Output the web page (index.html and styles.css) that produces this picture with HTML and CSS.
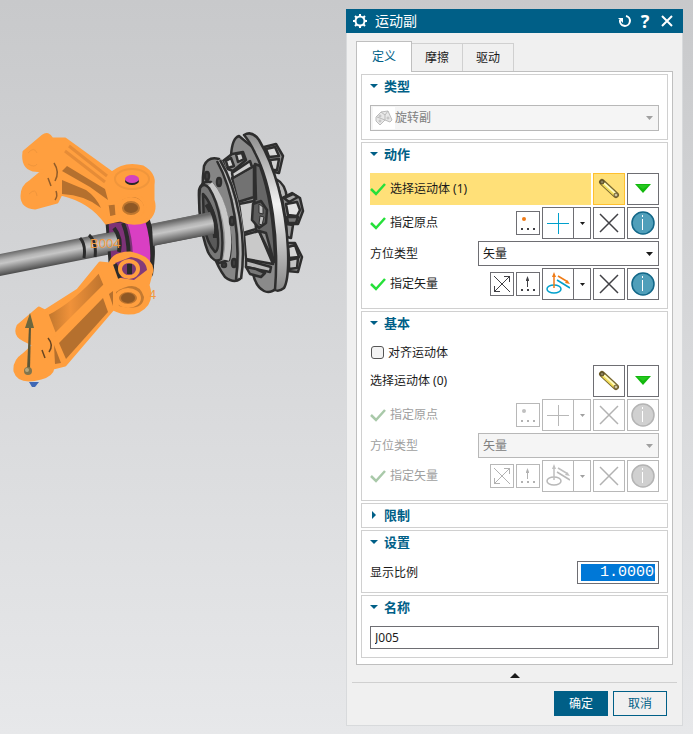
FILE: index.html
```html
<!DOCTYPE html>
<html lang="zh-CN">
<head>
    <meta charset="UTF-8">
    <meta name="viewport" content="width=device-width, initial-scale=1.0">
    <title>运动副</title>
    <link rel="stylesheet" href="styles.css">
</head>
<body>
    <!-- Shared icons -->
    <svg class="icon-defs" aria-hidden="true">
        <symbol id="icon-check" viewBox="0 0 16 16">
            <path d="M1 8 L6 13 L15 3" fill="none" stroke="currentColor" stroke-width="2.500"/>
        </symbol>
        <symbol id="icon-bone" viewBox="0 0 22 22">
            <path d="M4 4 L18 17" stroke="#77662f" stroke-width="6" stroke-linecap="round"/>
            <path d="M4 5 L17 17" stroke="#f2dc58" stroke-width="3"/>
            <path d="M6 5 L18 16" stroke="#fffbc0" stroke-width="2"/>
            <circle cx="4" cy="4" r="2" fill="#8b815f" stroke="#54451c"/>
            <circle cx="18" cy="17" r="2" fill="#cfc5a0" stroke="#6b5a2a"/>
        </symbol>
        <symbol id="icon-down" viewBox="0 0 16 10">
            <path d="M0 0 H16 L8 9 Z" fill="#12b80d"/>
            <path d="M2 1 H14 L8 5 Z" fill="#25c81f"/>
        </symbol>
        <symbol id="icon-point" viewBox="0 0 22 22">
            <circle class="accent-fill" cx="7" cy="7" r="2"/>
            <path class="ink-fill" d="M4 16h2v2h-2z M10 16h2v2h-2z M16 16h2v2h-2z"/>
        </symbol>
        <symbol id="icon-vector" viewBox="0 0 22 22">
            <path class="ink" d="M10.500 14 V5"/>
            <path class="ink-fill" d="M9 7 L10.500 3 L12 7 V8 H9 Z M4 16h2v2h-2z M10 16h2v2h-2z M16 16h2v2h-2z"/>
        </symbol>
        <symbol id="icon-reverse" viewBox="0 0 22 22">
            <path class="ink" d="M3 3 L19 19 M3 19 L19 3 M13 3.500 H18.500 V9 M3.500 13 V18.500 H9"/>
        </symbol>
        <symbol id="icon-plus" viewBox="0 0 22 22">
            <path class="blue" d="M0 11.500 H22 M11.500 1 V22"/>
        </symbol>
        <symbol id="icon-axis" viewBox="0 0 24 24">
            <ellipse class="blue thick" cx="8" cy="17" rx="7" ry="4"/>
            <path class="blue thick" d="M11 8 L24 16"/>
            <path class="accent thick" d="M8 16 V4 M12 4 L22 10"/>
            <path class="accent-fill" d="M6 5 L8 0 L10 5 Z M24 12 L19 11 L21 8 Z"/>
        </symbol>
        <symbol id="icon-cross" viewBox="0 0 20 20">
            <path class="ink thick" d="M1 1 L19 19 M1 19 L19 1"/>
        </symbol>
        <symbol id="icon-info" viewBox="0 0 24 24">
            <circle class="info-disc" cx="12" cy="12" r="11"/>
            <path d="M11.500 8 V19 M11.500 4 V6" stroke="#fff"/>
        </symbol>
        <symbol id="icon-caret" viewBox="0 0 7 4">
            <path d="M0 0 H7 L3.500 4 Z" fill="currentColor"/>
        </symbol>
    </svg>

    <main class="workspace">
        <svg class="scene" viewBox="0 0 346 734" preserveAspectRatio="xMinYMin meet" role="img" aria-label="三维模型">
            <defs>
                <linearGradient id="steel" gradientUnits="userSpaceOnUse" x1="0" y1="254" x2="4" y2="275">
                    <stop offset="0" stop-color="#6a6a6a"/>
                    <stop offset="0.300" stop-color="#b4b4b4"/>
                    <stop offset="0.450" stop-color="#c6c6c6"/>
                    <stop offset="0.700" stop-color="#8e8e8e"/>
                    <stop offset="1" stop-color="#4c4c4c"/>
                </linearGradient>
                <linearGradient id="rim" x1="0" y1="0" x2="0" y2="1">
                    <stop offset="0" stop-color="#8c8c8c"/>
                    <stop offset="0.450" stop-color="#f2f2f2"/>
                    <stop offset="1" stop-color="#888"/>
                </linearGradient>
                <linearGradient id="arm" x1="0" y1="0" x2="1" y2="0">
                    <stop offset="0" stop-color="#bd752d"/>
                    <stop offset="0.400" stop-color="#f0923a"/>
                    <stop offset="1" stop-color="#bb722d"/>
                </linearGradient>
            </defs>

            <!-- Shaft -->
            <path d="M0 254 L215 211 L218 233 L0 276 Z" fill="url(#steel)"/>
            <g fill="none" stroke="#2b2b2b" stroke-width="3">
                <path d="M80 238 Q86 244 84 258"/>
                <path d="M89 235 Q97 242 95 257"/>
            </g>

            <!-- Magenta collar -->
            <path d="M107 222 L148 219 Q157 244 151 275 L121 279 L110 262 Z" fill="#7d3277" stroke="#2b2b2b" stroke-width="3"/>
            <path d="M127 222 L147 220 Q154 246 149 275 L131 278 Q136 246 127 222 Z" fill="#d93fc3"/>
            <path d="M97 235 L118 231 Q122 240 119 250 L97 253 Z" fill="url(#steel)"/>
            <g fill="none" stroke="#2b2b2b" stroke-width="4">
                <path d="M114 228 Q122 238 119 252"/>
                <path d="M123 223 Q131 242 128 276"/>
                <path d="M147 220 Q155 246 151 275"/>
            </g>

            <!-- Bolts behind the flange -->
            <g stroke="#2e2e2e" stroke-width="2.500" stroke-linejoin="round">
                <path d="M264 147 L276 144 L283 156 L279 173 L268 171 Z" fill="#8f8f8f"/>
                <path d="M266 149 L275 147 L279 156 L269 157 Z" fill="#d8d8d8"/>
                <path d="M270 160 L279 159 L277 170 L272 170 Z" fill="#cfcfcf"/>
                <path d="M276 179 Q286 184 287 199 L281 198 Z" fill="#b8b8b8"/>
                <path d="M282 198 L292 193 L300 198 L303 211 L298 224 L286 224 Z" fill="#8a8a8a"/>
                <path d="M284 198 L293 194 L298 197 L289 202 Z" fill="#a8a8a8"/>
                <path d="M286 204 L297 202 L300 210 L297 216 L288 215 Z" fill="#e2e2e2"/>
                <path d="M287 217 L298 217 L296 223 L288 223 Z" fill="#777"/>
                <path d="M286 224 L293 225 L291 238 L287 237 Z" fill="#999"/>
                <path d="M287 243 L295 243 L302 257 L298 272 L287 271 Z" fill="#9a9a9a"/>
                <path d="M288 247 L295 245 L299 257 L289 258 Z" fill="#d6d6d6"/>
                <path d="M289 260 L298 258 L297 268 L289 269 Z" fill="#c2c2c2"/>
            </g>

            <!-- Rear flange -->
            <g stroke="#2e2e2e" stroke-width="2.500" stroke-linejoin="round">
                <path d="M231 156 Q232 138 239 136 L256 150 Q278 200 277 288 Q270 294 264 291 Q256 287 253 274 L240 240 Z" fill="#8a8a8a"/>
                <path d="M255 164 L260 166 Q274 205 275 262 L254 226 Z" fill="#666"/>
                <path d="M255 164 L256 200" fill="none"/>
                <path d="M232 178 L254 166 L254 197 L238 202 Z" fill="#727272"/>
                <path d="M239 204 L254 201 L256 229 L243 233 Z" fill="#cecece"/>
                <path d="M244 235 L259 231 L273 264 L246 259 Z" fill="#c9c9c9"/>
                <path d="M259 231 L266 233 L274 262 Z" fill="#8f8f8f"/>
                <path d="M246 260 L271 267 L270 272 L246 267 Z" fill="#b8b8b8"/>
                <path d="M246 267 L256 269 L265 273 L261 277 L250 274 Z" fill="#777"/>
                <path d="M232 173 L250 161 L252 167 L233 178 Z" fill="#cfcfcf"/>
                <path d="M223 161 L232 154 L243 152 L246 160 L233 171 L225 168 Z" fill="#8e8e8e"/>
                <path d="M226 161 L231 158 L234 166 L228 168 Z" fill="#d6d6d6"/>
                <path d="M236 154 L242 153 L244 159 L238 162 Z" fill="#d0d0d0"/>
                <path d="M253 204 L261 201 L267 210 L266 223 L259 228 L252 220 Z" fill="#5c5c5c"/>
                <path d="M259 204 L263 207 L263 214 L259 213 Z M260 216 L264 217 L262 225 L259 224 Z" fill="#bdbdbd" stroke-width="1"/>
                <path d="M244 135 Q252 130 259 140 C274 165 286 205 288 250 Q289 280 284 288 Q279 292 275 290 C279 240 272 185 255 153 Q250 142 244 135 Z" fill="url(#rim)"/>
            </g>

            <!-- Front hub -->
            <g stroke="#2e2e2e" stroke-width="2.500" stroke-linejoin="round">
                <path d="M204 166 Q208 156 219 159 C236 186 247 240 240 279 Q234 284 225 277 C205 250 200 196 204 166 Z" fill="#858585"/>
                <path d="M219 160 C238 192 246 240 240 278" fill="none" stroke="#b8b8b8" stroke-width="5"/>
                <path d="M217 161 C233 190 241 236 236 280" fill="none"/>
                <path d="M220 160 C238 190 247 240 241 279" fill="none"/>
                <path d="M199 190 Q202 180 211 182 C226 200 234 240 229 260 L219 263 C205 250 198 215 199 190 Z" fill="#999"/>
                <path d="M210 184 C225 201 232 238 226 260" fill="none" stroke="#c8c8c8" stroke-width="6"/>
                <path d="M200 188 Q204 182 209 188 C220 205 225 238 221 259 Q214 264 208 252 C200 231 198 205 200 188 Z" fill="#777"/>
                <path d="M203 194 Q213 204 217 230 Q220 250 215 252 Q207 243 204 226 Z" fill="#595959"/>
                <path d="M207 204 Q215 214 216 238" fill="none" stroke-width="6"/>
                <ellipse cx="207" cy="176" rx="2" ry="4" fill="#454545"/>
                <ellipse cx="219" cy="182" rx="2" ry="4" fill="#454545"/>
                <ellipse cx="232" cy="221" rx="2" ry="4" fill="#454545"/>
                <ellipse cx="234" cy="263" rx="2" ry="4" fill="#454545"/>
                <circle cx="224" cy="265" r="2" fill="#454545"/>
            </g>
            <path d="M152 224 L210 212 Q215 222 214 234 L153 246 Z" fill="url(#steel)"/>

            <!-- Upper arm -->
            <g stroke="#ff9f3f" stroke-width="3" stroke-linejoin="round" fill="#ff9f3f">
                <path d="M24 152 L43 136 Q48 132 52 139 L65 139 L112 173 Q125 162 143 167 Q155 174 153 185 V200 Q157 213 146 221 Q133 226 120 220 L106 223 Q91 201 61 194 L57 202 L35 208 Q22 207 22 196 Q22 186 31 181 L43 171 L33 170 Q22 167 24 152 Z"/>
                <path d="M67 166 L105 189 L108 200 L90 187 L62 171 Z" fill="#b5702e" stroke="none"/>
                <path d="M62 180 L86 190 Q96 197 101 208 Q85 195 62 194 Z" fill="#b5702e" stroke="none"/>
                <path d="M107 204 L116 203 L117 216 L109 218 Z" fill="#b5702e"/>
                <path d="M121 199 Q139 190 145 205 Q143 219 126 216 L121 209 Z" fill="#b5702e"/>
            </g>
            <g fill="none">
                <path d="M69 146 L107 176 M65 151 L105 182" stroke="#e68c37" stroke-width="3"/>
                <ellipse cx="132" cy="179" rx="17" ry="10" stroke="#f0963c" stroke-width="2"/>
                <ellipse cx="132" cy="181" rx="7" ry="4" fill="#262626"/>
                <ellipse cx="132" cy="179" rx="7" ry="4" fill="#d342bd"/>
                <ellipse cx="131" cy="208" rx="11" ry="9" fill="#bd762f" stroke="#ff9f3f" stroke-width="4"/>
                <ellipse cx="131" cy="208" rx="7" ry="5" fill="#8e5825"/>
                <path d="M54 163 Q60 172 55 181 M48 178 L51 186 M55 200 Q58 196 56 191" stroke="#925d2a" stroke-width="1.500"/>
                <path d="M28 153 q6 -7 9 0 M28 164 q7 4 9 0 M29 194 q7 -7 8 2" stroke="#f0963c"/>
            </g>

            <!-- Lower arm -->
            <g stroke="#ff9f3f" stroke-width="3" stroke-linejoin="round" fill="#ff9f3f">
                <path d="M18 326 L39 308 L45 311 L78 290 L100 263 L110 264 Q113 253 130 253 Q151 257 152 270 L148 285 Q154 303 139 311 Q127 316 113 309 L65 365 L53 368 Q52 375 41 378 Q19 384 15 371 Q14 361 23 355 L34 345 L24 340 Q14 335 18 326 Z"/>
                <path d="M99 271 L105 285 L55 335 L47 314 Q74 300 99 271 Z" fill="url(#arm)"/>
                <path d="M103 298 L108 312 L66 359 L59 343 Z" fill="#b5702e" stroke="none"/>
                <path d="M109 294 L113 291 L113 306 Z" fill="#b5702e" stroke="none"/>
                <path d="M54 345 L61 363 L55 364 Z" fill="#b5702e" stroke="none"/>
            </g>
            <path d="M115 263 L121 278 L134 280 L147 270 Q146 259 131 257 Z" fill="#833b7a"/>
            <path d="M115 264 L120 278" stroke="#2b2b2b" stroke-width="4"/>
            <ellipse cx="129" cy="269" rx="9" ry="8" fill="#793874" stroke="#ff9f3f" stroke-width="4"/>
            <path d="M127 264 H132 V274 H127 Z" fill="#2b2b2b"/>
            <path d="M116 292 Q138 278 144 297 Q143 312 119 306 Z" fill="#c47a31"/>
            <ellipse cx="128" cy="298" rx="11" ry="8" fill="#be752e" stroke="#ff9f3f" stroke-width="4"/>
            <ellipse cx="128" cy="298" rx="7" ry="5" fill="#8e5825"/>
            <path d="M42 350 L45 358 M48 338 Q54 345 49 352" fill="none" stroke="#694622" stroke-width="1.500"/>
            <path d="M29 382 H39 L35 387 H32 Z" fill="#3f68b5"/>
            <path d="M29 326 H31 L30 370 H27 Z" fill="#5d5737"/>
            <path d="M30 313 L25 328 H34 Z" fill="#6c673e"/>
            <circle cx="28" cy="371" r="4" fill="#81754d"/>
            <circle cx="27" cy="370" r="2" fill="#b5a77e"/>
            <text class="scene-label" x="90" y="248">B004</text>
            <text class="scene-label" x="149" y="299">4</text>
        </svg>

        <form class="dialog" aria-label="运动副">
            <header class="titlebar">
                <svg class="gear" viewBox="0 0 16 16"><g fill="none" stroke="#fff"><circle cx="8" cy="8" r="4.500" stroke-width="2"/><path d="M8 1 V4 M8 12 V15 M1 8 H4 M12 8 H15 M3 3 L5 5 M11 11 L13 13 M3 13 L5 11 M11 5 L13 3" stroke-width="2"/></g></svg>
                <h1>运动副</h1>
                <button type="button" class="title-button" aria-label="重置"><svg viewBox="0 0 14 14"><path d="M8 2 A5 5 0 1 1 2 6" fill="none" stroke="#fff" stroke-width="2"/><path d="M0 4 H5 V9 Z" fill="#fff"/></svg></button>
                <button type="button" class="title-button help" aria-label="帮助">?</button>
                <button type="button" class="title-button" aria-label="关闭"><svg viewBox="0 0 14 14"><path d="M2 2 L12 12 M2 12 L12 2" stroke="#fff" stroke-width="2"/></svg></button>
            </header>

            <nav class="tabs" role="tablist">
                <button type="button" class="tab active" role="tab" aria-selected="true">定义</button>
                <button type="button" class="tab" role="tab">摩擦</button>
                <button type="button" class="tab" role="tab">驱动</button>
            </nav>

            <div class="panel">
                <section class="group">
                    <h2><span class="arrow"></span>类型</h2>
                    <div class="select-box tall disabled">
                        <svg class="joint" viewBox="0 0 22 22"><g fill="#e8e8e8" stroke="#bbb"><path d="M3 10 L8 5 L15 4 L19 13 L17 15 L12 13 L7 18 L3 14 Z"/><path d="M8 5 L12 8 L12 13 M15 4 L12 8 M4 10 L12 13" fill="none"/><circle cx="7" cy="9" r="1"/><circle cx="7" cy="14" r="1"/><circle cx="15" cy="11" r="1"/></g></svg>
                        <select aria-label="类型" disabled><option>旋转副</option></select>
                        <svg class="caret"><use href="#icon-caret"/></svg>
                    </div>
                </section>

                <section class="group">
                    <h2><span class="arrow"></span>动作</h2>
                    <div class="row">
                        <div class="label highlight"><svg class="check"><use href="#icon-check"/></svg>选择运动体 (1)</div>
                        <button type="button" class="tool picked" aria-label="选择运动体"><svg class="i22"><use href="#icon-bone"/></svg></button>
                        <button type="button" class="tool" aria-label="更多"><svg class="down"><use href="#icon-down"/></svg></button>
                    </div>
                    <div class="row">
                        <div class="label"><svg class="check"><use href="#icon-check"/></svg>指定原点</div>
                        <button type="button" class="tool small" aria-label="点对话框"><svg class="i22"><use href="#icon-point"/></svg></button>
                        <div class="split">
                            <button type="button" aria-label="点"><svg class="i22"><use href="#icon-plus"/></svg></button>
                            <button type="button" class="drop" aria-label="点类型"><svg class="mini"><use href="#icon-caret"/></svg></button>
                        </div>
                        <button type="button" class="tool" aria-label="清除"><svg class="i20"><use href="#icon-cross"/></svg></button>
                        <button type="button" class="tool" aria-label="信息"><svg class="i24"><use href="#icon-info"/></svg></button>
                    </div>
                    <div class="row">
                        <label class="label" for="orient1">方位类型</label>
                        <div class="select-box orient">
                            <select id="orient1"><option>矢量</option></select>
                            <svg class="caret"><use href="#icon-caret"/></svg>
                        </div>
                    </div>
                    <div class="row">
                        <div class="label"><svg class="check"><use href="#icon-check"/></svg>指定矢量</div>
                        <button type="button" class="tool small" aria-label="反向"><svg class="i22"><use href="#icon-reverse"/></svg></button>
                        <button type="button" class="tool small" aria-label="矢量对话框"><svg class="i22"><use href="#icon-vector"/></svg></button>
                        <div class="split">
                            <button type="button" aria-label="矢量"><svg class="i24"><use href="#icon-axis"/></svg></button>
                            <button type="button" class="drop" aria-label="矢量类型"><svg class="mini"><use href="#icon-caret"/></svg></button>
                        </div>
                        <button type="button" class="tool" aria-label="清除"><svg class="i20"><use href="#icon-cross"/></svg></button>
                        <button type="button" class="tool" aria-label="信息"><svg class="i24"><use href="#icon-info"/></svg></button>
                    </div>
                </section>

                <section class="group">
                    <h2><span class="arrow"></span>基本</h2>
                    <label class="row align-row"><input type="checkbox">对齐运动体</label>
                    <div class="row">
                        <div class="label">选择运动体 (0)</div>
                        <button type="button" class="tool" aria-label="选择运动体"><svg class="i22"><use href="#icon-bone"/></svg></button>
                        <button type="button" class="tool" aria-label="更多"><svg class="down"><use href="#icon-down"/></svg></button>
                    </div>
                    <div class="row disabled">
                        <div class="label"><svg class="check"><use href="#icon-check"/></svg>指定原点</div>
                        <button type="button" class="tool small" aria-label="点对话框" disabled><svg class="i22"><use href="#icon-point"/></svg></button>
                        <div class="split">
                            <button type="button" aria-label="点" disabled><svg class="i22"><use href="#icon-plus"/></svg></button>
                            <button type="button" class="drop" aria-label="点类型" disabled><svg class="mini"><use href="#icon-caret"/></svg></button>
                        </div>
                        <button type="button" class="tool" aria-label="清除" disabled><svg class="i20"><use href="#icon-cross"/></svg></button>
                        <button type="button" class="tool" aria-label="信息" disabled><svg class="i24"><use href="#icon-info"/></svg></button>
                    </div>
                    <div class="row disabled">
                        <label class="label" for="orient2">方位类型</label>
                        <div class="select-box orient disabled">
                            <select id="orient2" disabled><option>矢量</option></select>
                            <svg class="caret"><use href="#icon-caret"/></svg>
                        </div>
                    </div>
                    <div class="row disabled">
                        <div class="label"><svg class="check"><use href="#icon-check"/></svg>指定矢量</div>
                        <button type="button" class="tool small" aria-label="反向" disabled><svg class="i22"><use href="#icon-reverse"/></svg></button>
                        <button type="button" class="tool small" aria-label="矢量对话框" disabled><svg class="i22"><use href="#icon-vector"/></svg></button>
                        <div class="split">
                            <button type="button" aria-label="矢量" disabled><svg class="i24"><use href="#icon-axis"/></svg></button>
                            <button type="button" class="drop" aria-label="矢量类型" disabled><svg class="mini"><use href="#icon-caret"/></svg></button>
                        </div>
                        <button type="button" class="tool" aria-label="清除" disabled><svg class="i20"><use href="#icon-cross"/></svg></button>
                        <button type="button" class="tool" aria-label="信息" disabled><svg class="i24"><use href="#icon-info"/></svg></button>
                    </div>
                </section>

                <section class="group collapsed">
                    <h2><span class="arrow"></span>限制</h2>
                </section>

                <section class="group">
                    <h2><span class="arrow"></span>设置</h2>
                    <div class="row">
                        <label class="label" for="scale">显示比例</label>
                        <div class="scale-box"><input type="text" id="scale" value=" 1.00000"></div>
                    </div>
                </section>

                <section class="group">
                    <h2><span class="arrow"></span>名称</h2>
                    <input type="text" class="name-input" aria-label="名称" value="J005">
                </section>
            </div>

            <div class="fold"><span class="arrow-up"></span></div>

            <footer class="actions">
                <button type="submit" class="action primary">确定</button>
                <button type="button" class="action">取消</button>
            </footer>
        </form>
    </main>
</body>
</html>
```

FILE: styles.css
```css
* {
    box-sizing: border-box;
}

body {
    margin: 0;
    min-height: 100vh;
    background: linear-gradient(#c8c9cb, #e7e8ea);
    font-family: "Noto Sans", "Noto Sans CJK SC", sans-serif;
    font-size: 12px;
    line-height: 16px;
    color: #1a1a1a;
}

h1, h2 {
    margin: 0;
}

button, input, select {
    font: inherit;
    color: inherit;
    padding: 0;
    margin: 0;
}

button {
    display: flex;
    align-items: center;
    justify-content: center;
    background: #fff;
    border: 1px solid #6e6e73;
}

svg {
    display: block;
    flex: none;
}

.icon-defs {
    position: absolute;
    width: 0;
    height: 0;
}

.workspace {
    display: grid;
    grid-template-columns: 1fr 337px;
    align-items: start;
    padding-right: 10px;
}

.scene {
    width: 100%;
}

.scene-label {
    font-family: "Liberation Sans", sans-serif;
    font-size: 13px;
    fill: #f09a42;
}

/* Dialog */
.dialog {
    margin: 9px 0 8px;
    background: #f0f0f0;
    border: 1px solid #d8dadc;
    border-top: 0;
}

.titlebar {
    display: flex;
    align-items: center;
    height: 24px;
    margin: 0 -1px;
    padding: 0 6px;
    background: #005f87;
    color: #fff;
}

.titlebar h1 {
    flex: 1;
    margin-left: 7px;
    font-size: 14px;
    font-weight: normal;
    line-height: 20px;
}

.gear {
    width: 16px;
    height: 16px;
}

.title-button {
    width: 20px;
    height: 20px;
    background: none;
    border: 0;
}

.title-button svg {
    width: 14px;
    height: 14px;
}

.title-button:last-child {
    margin-left: 2px;
}

.help {
    font-size: 18px;
    font-weight: bold;
}

/* Tabs */
.tabs {
    display: flex;
    align-items: flex-end;
    position: relative;
    margin: 8px 9px 0;
}

.tab {
    width: 51px;
    height: 28px;
    background: #f0f0f0;
    border: 1px solid #d0d0d0;
    border-width: 1px 1px 0 0;
}

.tab.active {
    width: 56px;
    height: 31px;
    margin-bottom: -1px;
    background: #fff;
    border: 1px solid #bfbfbf;
    border-bottom: 0;
    color: #005f87;
}

.panel {
    display: flex;
    flex-direction: column;
    gap: 2px;
    margin: 0 9px;
    padding: 2px 4px 6px;
    background: #fff;
    border: 1px solid #bfbfbf;
}

/* Groups */
.group {
    display: flex;
    flex-direction: column;
    gap: 2px;
    padding: 0 8px 8px;
    border: 1px solid #d0d0d0;
}

.group h2 {
    display: flex;
    align-items: center;
    height: 24px;
    margin-bottom: 4px;
    padding-bottom: 2px;
    font-size: 13px;
    color: #005f87;
}

.arrow {
    width: 14px;
}

.arrow::before {
    content: "";
    display: block;
    width: 0;
    border: 4px solid transparent;
    border-top-color: #005f87;
    border-bottom: 0;
}

.collapsed {
    padding-bottom: 0;
}

.group.collapsed h2 {
    height: 23px;
    margin: 0;
}

.collapsed .arrow::before {
    margin-left: 2px;
    border: 4px solid transparent;
    border-left-color: #005f87;
    border-right: 0;
}

.row {
    display: flex;
    align-items: center;
    gap: 2px;
}

.label {
    flex: 1;
    display: flex;
    align-items: center;
}

.highlight {
    align-self: stretch;
    background: #ffe078;
}

.check {
    width: 16px;
    height: 16px;
    margin-right: 4px;
    color: #26e03a;
}

.align-row {
    height: 21px;
    gap: 4px;
}

.align-row input {
    appearance: none;
    width: 13px;
    height: 13px;
    margin-left: 1px;
    background: #f3f3f3;
    border: 1px solid #555;
    border-radius: 3px;
}

/* Tool buttons */
.tool {
    width: 32px;
    height: 32px;
}

.tool.small {
    width: 24px;
    height: 24px;
}

.tool.picked {
    background: #ffe078;
    border-color: #ffc02e;
}

.split {
    display: flex;
    width: 49px;
    height: 32px;
    border: 1px solid #6e6e73;
}

.split button {
    flex: 1;
    border: 0;
}

.split .drop {
    flex: 0 0 17px;
    border-left: 1px solid #6e6e73;
}

.i20 {
    width: 20px;
    height: 20px;
}

.i22 {
    width: 22px;
    height: 22px;
}

.i24 {
    width: 24px;
    height: 24px;
}

.down {
    width: 16px;
    height: 10px;
}

.mini {
    width: 5px;
    height: 3px;
}

.ink {
    fill: none;
    stroke: var(--ink, #404045);
}

.ink-fill {
    fill: var(--ink, #404045);
}

.blue {
    fill: none;
    stroke: var(--blue, #00a0cc);
}

.accent {
    fill: none;
    stroke: var(--accent, #ef7b16);
}

.accent-fill {
    fill: var(--accent, #ef7b16);
}

.thick {
    stroke-width: 1.500;
}

.info-disc {
    fill: var(--disc, #509fba);
    stroke: var(--disc-edge, #126788);
    stroke-width: 1.500;
}

/* Select boxes */
.select-box {
    display: flex;
    align-items: center;
    height: 25px;
    padding-right: 5px;
    background: #fff;
    border: 1px solid #6e6e73;
}

.select-box.tall {
    height: 26px;
    padding-left: 2px;
}

.orient {
    width: 181px;
    padding-left: 4px;
}

.select-box select {
    flex: 1;
    appearance: none;
    background: none;
    border: 0;
    opacity: 1;
}

.joint {
    width: 22px;
    height: 22px;
    background: #fff;
}

.caret {
    width: 7px;
    height: 4px;
}

/* Disabled look */
.disabled {
    --ink: #b2b2b2;
    --blue: #b8b8b8;
    --accent: #c0c0c0;
    --disc: #d0d0d0;
    --disc-edge: #b4b4b4;
    color: #a0a0a0;
}

.disabled .check {
    color: #a9c9a9;
}

.disabled .tool,
.disabled .split,
.disabled .split .drop,
.select-box.disabled {
    border-color: #b8b8b8;
}

.select-box.disabled {
    background: #f5f5f5;
    color: #808080;
}

.select-box.disabled .caret {
    color: #a0a0a0;
}

/* Text boxes */
.scale-box {
    width: 82px;
    height: 23px;
    padding: 2px 3px;
    border: 1px solid #6e6e73;
}

.scale-box input {
    display: block;
    width: 74px;
    height: 17px;
    padding-left: 10px;
    background: #0078d7;
    border: 0;
    color: #fff;
    font-family: "Liberation Mono", monospace;
    font-size: 15px;
    white-space: pre;
}

.name-input {
    height: 23px;
    padding: 0 4px;
    background: #fff;
    border: 1px solid #6e6e73;
}

/* Footer */
.fold {
    display: flex;
    justify-content: center;
    margin: 0 5px;
    padding: 8px 0 4px;
    border-bottom: 1px solid #d0d0d0;
}

.arrow-up {
    border: 5px solid transparent;
    border-bottom-color: #1a1a1a;
    border-top: 0;
}

.actions {
    display: flex;
    justify-content: flex-end;
    gap: 5px;
    padding: 8px 15px 9px;
}

.action {
    width: 54px;
    height: 25px;
    background: #f0f0f0;
    border-color: #005f87;
    color: #005f87;
}

.action.primary {
    background: #005f87;
    color: #fff;
}
```
